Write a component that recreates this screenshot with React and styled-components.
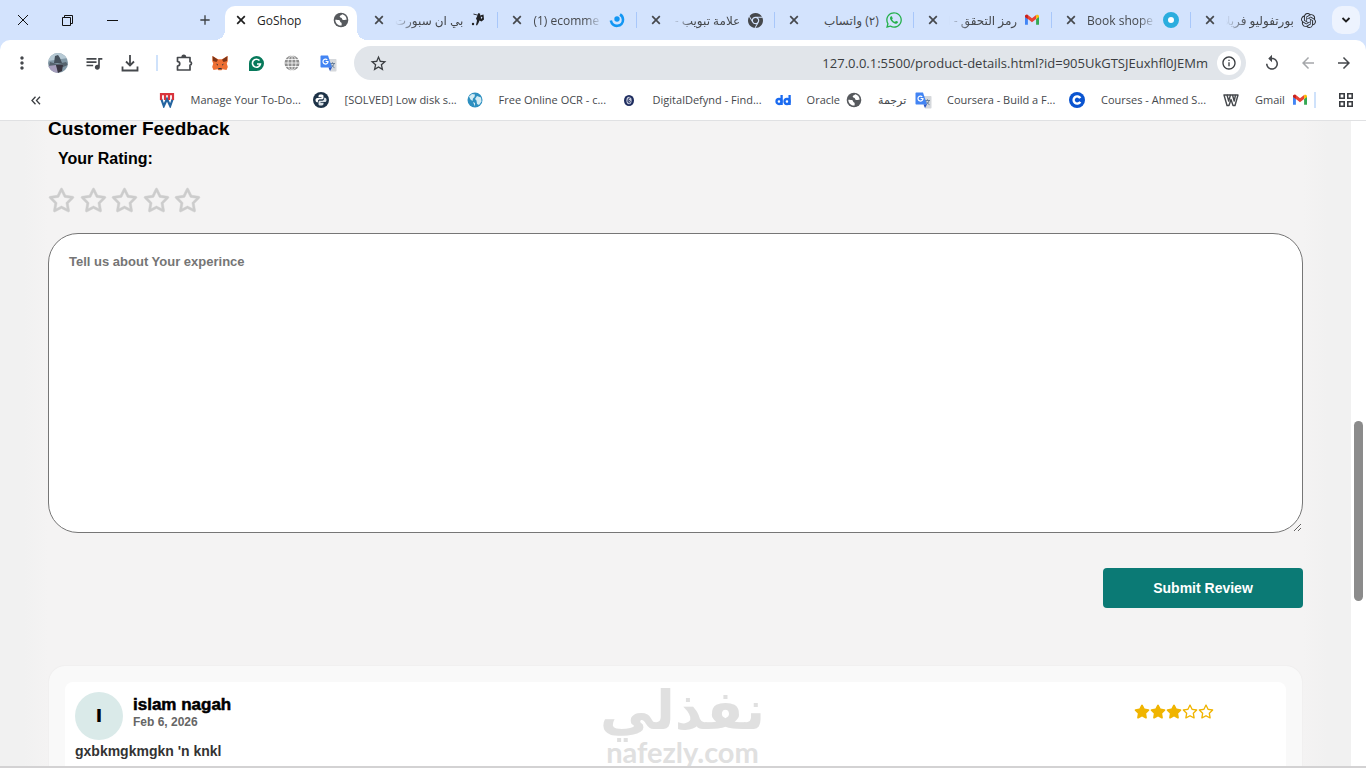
import React, { useState } from 'react';
import styled, { createGlobalStyle } from 'styled-components';
import { FaStar, FaRegStar, FaWhatsapp, FaChrome } from 'react-icons/fa6';
import { SiOpenai } from 'react-icons/si';
import {
    MdAdd,
    MdArrowBack,
    MdArrowForward,
    MdMoreVert,
    MdOutlineInfo,
    MdQueueMusic,
    MdReplay,
    MdStarBorder,
} from 'react-icons/md';

const GlobalStyle = createGlobalStyle`
    * {
        box-sizing: border-box;
    }

    body {
        margin: 0;
        overflow: hidden;
        font-family: 'Liberation Sans', Arial, sans-serif;
    }

    button {
        font: inherit;
        color: inherit;
        border: 0;
        padding: 0;
        background: none;
        cursor: pointer;
    }
`;

const Window = styled.div`
    display: flex;
    flex-direction: column;
    height: 100vh;
    overflow: hidden;
    background: #fff;
`;

const Chrome = styled.header`
    flex: none;
    background: #d3e3fd;
    border-bottom: 1px solid #e0e1e3;
    font-family: 'Open Sans', 'DejaVu Sans', sans-serif;
    color: #45484c;
`;

const TabStrip = styled.div`
    display: flex;
    align-items: center;
    height: 40px;
    padding-right: 6px;
`;

const WindowControl = styled.button`
    display: flex;
    align-items: center;
    justify-content: center;
    width: 45px;
    height: 40px;
    color: #111;
`;

const NewTab = styled.button`
    display: flex;
    align-items: center;
    justify-content: center;
    width: 28px;
    height: 28px;
    margin: 0 6px 0 auto;
    color: #3c4043;
`;

const Controls = styled.div`
    display: flex;
    width: 225px;
    align-items: center;
`;

const TabBox = styled.div`
    position: relative;
    display: flex;
    align-items: center;
    flex: ${props => props.$active ? '0 0 132px' : '1 1 0'};
    min-width: 0;
    height: ${props => props.$active ? '34px' : '16px'};
    margin: ${props => props.$active ? '6px 3px 0 0' : '0'};
    padding: ${props => props.$active ? '0 8px 6px 9px' : '0 11px 0 12px'};
    border-radius: ${props => props.$active ? '10px 10px 0 0' : '0'};
    background: ${props => props.$active ? '#fff' : 'transparent'};
    color: ${props => props.$active ? '#1f1f1f' : '#45484c'};
    border-right: ${props => props.$divider ? '1px solid #a8c7fa' : '0'};

    &::before,
    &::after {
        content: '';
        display: ${props => props.$active ? 'block' : 'none'};
        position: absolute;
        bottom: 0;
        width: 10px;
        height: 10px;
    }

    &::before {
        left: -10px;
        background: radial-gradient(circle at 0 0, transparent 10px, #fff 10px);
    }

    &::after {
        right: -10px;
        background: radial-gradient(circle at 100% 0, transparent 10px, #fff 10px);
    }
`;

const TabClose = styled.button`
    display: flex;
    justify-content: center;
    flex: none;
    width: 14px;
`;

const TabTitle = styled.span`
    flex: 1;
    margin: 0 7px 0 9px;
    padding-top: 2px;
    overflow: hidden;
    white-space: nowrap;
    font-size: 12px;
    line-height: 18px;
    direction: ${props => props.$rtl ? 'rtl' : 'ltr'};
    text-align: ${props => props.$rtl ? 'right' : 'left'};
    mask-image: ${props => {
        if (!props.$fade) return 'none';
        return props.$rtl
            ? 'linear-gradient(to left, #000 70%, transparent)'
            : 'linear-gradient(to right, #000 75%, transparent)';
    }};
`;

const Favicon = styled.span`
    display: flex;
    align-items: center;
    justify-content: center;
    flex: none;
    width: 16px;
    height: 16px;

    svg {
        flex: none;
    }
`;

const TabSearch = styled.button`
    display: flex;
    align-items: center;
    justify-content: center;
    flex: none;
    width: 28px;
    height: 28px;
    margin-left: 4px;
    border-radius: 10px;
    background: #edf3fe;
    color: #1f1f1f;
`;

const Toolbar = styled.div`
    display: flex;
    align-items: center;
    height: 46px;
    padding: 0 4px;
    border-radius: 10px 10px 0 0;
    background: #fff;
`;

const ToolButton = styled.button`
    display: flex;
    align-items: center;
    justify-content: center;
    flex: none;
    width: 36px;
    height: 34px;
    color: ${props => props.$muted ? '#a5a7aa' : '#45484c'};
`;

const Divider = styled.span`
    flex: none;
    width: 2px;
    height: 16px;
    margin: ${props => props.$wide ? '0 18px 0 6px' : '0 8px'};
    background: #cfe2fb;
`;

const AddressBar = styled.form`
    display: flex;
    align-items: center;
    flex: 1;
    height: 34px;
    margin: 0 8px;
    padding: 0 5px 0 12px;
    border-radius: 17px;
    background: #e1e5ea;
`;

const Address = styled.input`
    flex: 1;
    min-width: 0;
    margin: 0 9px;
    padding: 0;
    border: 0;
    outline: 0;
    background: none;
    color: #3a3d41;
    font: 13px 'Open Sans', sans-serif;
    text-align: right;
`;

const RoundButton = styled.button`
    display: flex;
    align-items: center;
    justify-content: center;
    width: 24px;
    height: 24px;
    border-radius: 50%;
    background: ${props => props.$filled ? '#fff' : 'transparent'};
    color: #3a3d41;
`;

const BookmarkBar = styled.nav`
    display: flex;
    align-items: center;
    height: 34px;
    padding: 0 8px 6px 24px;
    background: #fff;
`;

const Bookmarks = styled.div`
    display: flex;
    flex: 1;
    justify-content: flex-end;
    gap: 16px;
`;

const Bookmark = styled.a`
    display: flex;
    align-items: center;
    gap: 6px;
    color: #45484c;
    text-decoration: none;
    font-size: 11px;
    line-height: 18px;
    white-space: nowrap;
`;

const BookmarkLabel = styled.span`
    min-width: ${props => props.$long ? '116px' : '31px'};
`;

const Viewport = styled.div`
    display: flex;
    flex: 1;
    min-height: 0;
    border-bottom: 2px solid #d3d2d3;
`;

const Page = styled.main`
    flex: 1;
    overflow: hidden;
    padding: 0 48px;
    background: linear-gradient(to right, #f1f1f1 24px, #f4f3f3 48px, #f4f3f3 calc(100% - 48px), #f1f1f1 calc(100% - 24px));
`;

const ScrollTrack = styled.div`
    flex: none;
    width: 15px;
    padding: 300px 3px 0;
    background: #fff;
`;

const ScrollThumb = styled.div`
    height: 180px;
    border-radius: 5px;
    background: #8b8b8b;
`;

const Heading = styled.h3`
    display: flex;
    align-items: flex-end;
    height: 18px;
    margin: 0;
    font-size: 19px;
    line-height: 20px;
`;

const RatingField = styled.fieldset`
    margin: 10px 0 0;
    padding: 0;
    border: 0;
`;

const RatingLabel = styled.legend`
    margin-left: 10px;
    padding: 0;
    font-size: 16px;
    font-weight: bold;
    line-height: 20px;
`;

const RatingStars = styled.div`
    display: flex;
    justify-content: space-between;
    width: 153px;
    margin-top: 18px;
`;

const RatingStar = styled.label`
    position: relative;
    display: flex;
    color: ${props => props.$on ? '#f0b400' : '#ccc'};
    cursor: pointer;

    input {
        position: absolute;
        inset: 0;
        margin: 0;
        opacity: 0;
    }

    svg {
        width: 27px;
        height: 26px;
        stroke: currentColor;
        stroke-width: 10;
    }
`;

const Feedback = styled.textarea`
    display: block;
    width: 100%;
    height: 300px;
    margin-top: 20px;
    padding: 20px;
    border: 1px solid #767676;
    border-radius: 30px;
    background: #fff;
    font: bold 13px/16px 'Liberation Sans', Arial, sans-serif;
    outline: 0;

    &::placeholder {
        color: #757575;
    }
`;

const SubmitButton = styled.button`
    display: block;
    width: 200px;
    height: 40px;
    margin: 35px 0 58px auto;
    border-radius: 4px;
    background: #0b7a75;
    color: #fff;
    font-size: 14px;
    font-weight: bold;
`;

const Reviews = styled.section`
    margin: 0 1px;
    padding: 16px;
    border-radius: 16px;
    background: #f9f9f9;
    box-shadow: 0 0 2px rgba(0, 0, 0, 0.06);
`;

const Review = styled.article`
    position: relative;
    min-height: 120px;
    padding: 10px;
    border-radius: 8px;
    background: #fff;
`;

const ReviewHeader = styled.div`
    display: flex;
    align-items: center;
    gap: 10px;
`;

const Avatar = styled.div`
    display: flex;
    align-items: center;
    justify-content: center;
    width: 48px;
    height: 48px;
    border-radius: 50%;
    background: #daeae9;
    font: 900 17px 'Inter', sans-serif;
`;

const Reviewer = styled.div`
    padding-bottom: 6px;
`;

const ReviewerName = styled.h4`
    margin: 0;
    font: bold 17px/18px 'Liberation Sans', Arial, sans-serif;
    -webkit-text-stroke: 0.5px #000;
`;

const ReviewDate = styled.time`
    display: block;
    color: #666;
    font-size: 12px;
    font-weight: bold;
    line-height: 16px;
`;

const ReviewStars = styled.div`
    display: flex;
    margin: 0 62px 10px auto;
    color: #f0b400;

    svg {
        width: 16px;
        height: 15px;
    }
`;

const ReviewText = styled.p`
    margin: 2px 0 0;
    color: #333;
    font-size: 14px;
    font-weight: bold;
    line-height: 18px;
`;

const Watermark = styled.div`
    position: absolute;
    top: 0;
    left: 0;
    right: 0;
    padding-left: 14px;
    color: #e0e0e0;
    text-align: center;
    pointer-events: none;
`;

const WatermarkArabic = styled.div`
    font: bold 54px/58px 'DejaVu Sans', sans-serif;
`;

const WatermarkLatin = styled.div`
    font: bold 29px/24px 'Lato', sans-serif;
`;

const CloseIcon = () => (
    <svg width="10" height="10" viewBox="0 0 10 10" stroke="currentColor" strokeWidth="1.700">
        <path d="M1.200 1.200l7.600 7.600M8.800 1.200L1.200 8.800" />
    </svg>
);

const GlobeIcon = () => (
    <svg width="16" height="16" viewBox="0 0 16 16">
        <circle cx="8" cy="8" r="7.3" fill="#56595d" />
        <path d="M2.300 7.800c1.700.2 3.500 0 4.400.8.700.7.100 1.700 1.300 1.900.9.200.7 1.400.6 3.100C5 13.800 2.300 11.300 2.300 7.800zM9 2.300c-.1 1.300-2.200.9-2.300 2.200-.1 1 1.400.9 1.900 1.500.6.700.4 1.900 1.700 2 1.300.1 1.900-.7 3.300-.2C13.700 5 11.700 2.700 9 2.300z" fill="#fff" />
    </svg>
);

const GmailIcon = () => (
    <svg width="16" height="16" viewBox="0 0 16 16">
        <path d="M1 4.500v8.300h2.900V7z" fill="#4285f4" />
        <path d="M15 4.500v8.300h-2.900V7z" fill="#34a853" />
        <path d="M1 4.200C1 2.800 2.700 2.200 3.900 3.100L8 6.200l4.100-3.100V7L8 10.200 3.900 7 1 4.900z" fill="#ea4335" />
        <path d="M1 4.200c0-1.400 1.700-2 2.900-1.100V7L1 4.900z" fill="#c5221f" />
        <path d="M15 4.200c0-1.400-1.700-2-2.900-1.100V7L15 4.900z" fill="#fbbc04" />
    </svg>
);

const TranslateIcon = () => (
    <svg width="17" height="17" viewBox="0 0 17 17">
        <path d="M7 4h8.500c.6 0 1 .4 1 1v10.500c0 .6-.4 1-1 1H10z" fill="#d5d8dc" />
        <path d="M10 8.500h5M12.500 7.300v1.200M14 8.500c-.4 2-1.700 3.300-3.300 4.200M11.300 9.500c.7 1.500 1.800 2.600 3.200 3.200" stroke="#69809c" fill="none" />
        <path d="M1.500.5H8l4 12H1.500c-.6 0-1-.4-1-1v-10c0-.6.4-1 1-1z" fill="#4284f3" />
        <path d="M8.500 12.500H12l-2 3.500z" fill="#2a56c6" />
        <path d="M7.300 4.800A2.500 2.500 0 1 0 8 6.500H5.600" stroke="#fff" strokeWidth="1.200" fill="none" />
    </svg>
);

const BeinIcon = () => (
    <svg width="16" height="16" viewBox="0 0 16 16">
        <path d="M3.500 1.500l4 1.200 1-1.700 1.700.8-.2 1.700 3.500-1 .5 5-2.500 2-2-1-1 2.500-1.500 2.500-1-.5 1-4.500-1-2 1.500-3-4-1z" fill="#202124" />
        <path d="M10.800 4.500l1.700.8-1.500 2z" fill="#d3e3fd" />
        <circle cx="3" cy="12" r="1.200" fill="#202124" />
    </svg>
);

const SwirlIcon = () => (
    <svg width="16" height="16" viewBox="0 0 16 16">
        <path d="M1.800 8.500c.9 3.400 3.500 5.600 6.700 5.300 3.300-.3 5.700-3 5.500-6.300-.1-2.200-1.200-4-3-5" fill="none" stroke="#1296f3" strokeWidth="2.600" />
        <circle cx="8" cy="7" r="2.700" fill="#1296f3" />
    </svg>
);

const RingIcon = () => (
    <svg width="16" height="16" viewBox="0 0 16 16">
        <circle cx="8" cy="8" r="5.500" fill="#fff" stroke="#2badde" strokeWidth="5" />
    </svg>
);

const StripedWIcon = () => (
    <svg width="16" height="16" viewBox="0 0 16 16" fill="none" strokeWidth="2.200">
        <path d="M2.300 7l2.500 7L8 7l3.200 7 2.500-7" stroke="#2464a0" />
        <path d="M2 8V2.200h4V8M6 2.200h4V8M10 2.200h4V8" stroke="#d8343c" />
    </svg>
);

const OutlineWIcon = () => (
    <svg width="16" height="16" viewBox="0 0 16 16" fill="none" stroke="#45484c" strokeWidth="1.400" strokeLinejoin="round">
        <path d="M1 3h3l1.700 6L7.500 3h2l1.700 6L12.500 3H15l-3 10.500h-2L8 7.500l-2 6H4z" />
        <path d="M4 3h3.500M9.500 3h3" />
    </svg>
);

const PythonIcon = () => (
    <svg width="16" height="16" viewBox="0 0 16 16">
        <circle cx="8" cy="8" r="8" fill="#1d3247" />
        <path d="M8 2.500c-1.800 0-2.500.6-2.500 1.500v1.300h3v.6H4.300C3 5.900 2.500 6.900 2.500 8s.5 2.200 1.500 2.200h1V9c0-.9.700-1.500 1.500-1.500h2.700c.8 0 1.300-.6 1.300-1.300V4c0-1-.8-1.500-2.500-1.500z" fill="#fff" />
        <path d="M8 13.500c1.800 0 2.500-.6 2.500-1.500v-1.300h-3v-.6h4.200c1.300 0 1.800-1 1.800-2.100s-.5-2.200-1.500-2.200h-1V7c0 .9-.7 1.500-1.500 1.500H6.800c-.8 0-1.300.6-1.300 1.300V12c0 1 .8 1.500 2.500 1.500z" fill="#dbe2e8" />
        <path d="M5.300 9.500c.2-1 .7-1.500 1.700-1.500h2c1 0 1.500-.5 1.700-1.500" fill="none" stroke="#1d3247" strokeWidth=".8" />
    </svg>
);

const EarthIcon = () => (
    <svg width="16" height="16" viewBox="0 0 16 16">
        <circle cx="8" cy="8" r="7.500" fill="#2d8fc0" />
        <path d="M2 4.500L5 2l3 .5L7.500 5 6 6.500 5.500 9 3.500 7.500zM10 4l4 1.500.5 4L12 13l-2-1-.5-3.500L8 7zM6 10l2 1v3.500z" fill="#d4ecf4" />
    </svg>
);

const OvalIcon = () => (
    <svg width="16" height="16" viewBox="0 0 16 16">
        <ellipse cx="8" cy="8.500" rx="5" ry="5.500" fill="#1e2d5f" />
        <ellipse cx="8" cy="8.500" rx="2.600" ry="3.700" fill="#c9cede" />
        <path d="M9.500 5.500C7.500 6 7 7.500 7 9c0 2.500 2.300 2.300 2.300.5 0-1.300-1.500-1.300-2 0" fill="none" stroke="#1e2d5f" />
    </svg>
);

const DdIcon = () => (
    <svg width="16" height="16" viewBox="0 0 16 16" fill="none" stroke="#1a6af0" strokeWidth="2.300">
        <circle cx="4" cy="9.500" r="2.500" />
        <path d="M6.600 3v10" />
        <circle cx="12" cy="9.500" r="2.500" />
        <path d="M14.600 3v10" />
    </svg>
);

const CourseraIcon = () => (
    <svg width="16" height="16" viewBox="0 0 16 16">
        <circle cx="8" cy="8" r="8" fill="#0a54d0" />
        <path d="M11.300 9.800a3.600 3.600 0 1 1 0-3.600" fill="none" stroke="#fff" strokeWidth="2.400" />
    </svg>
);

const FoxIcon = () => (
    <svg width="18" height="18" viewBox="0 0 18 18">
        <path d="M1.500 2L7 5.200h4L16.500 2l.3 5-1 2.500 1 3.500-1.300 3-4-.8-1 1h-3l-1-1-4 .8-1.300-3 1-3.500-1-2.500z" fill="#ee6f33" />
        <path d="M1.500 2l5.500 3.800L5.500 8 2 7zM16.500 2L11 5.800 12.500 8 16 7z" fill="#7d3518" />
        <path d="M5 9.500l2 1-.3 1.200zM13 9.500l-2 1 .3 1.200zM7.500 14h3l.4 1.300H7.100z" fill="#29343d" />
    </svg>
);

const GrammarlyIcon = () => (
    <svg width="17" height="17" viewBox="0 0 17 17">
        <path d="M8.500 1a7.500 7.500 0 1 1 0 15H1V8.500A7.500 7.500 0 0 1 8.500 1z" fill="#07795b" />
        <path d="M11.500 5.600A4 4 0 1 0 12.400 9H9" fill="none" stroke="#fff" strokeWidth="1.600" />
    </svg>
);

const WireGlobeIcon = () => (
    <svg width="16" height="16" viewBox="0 0 16 16">
        <circle cx="8" cy="8" r="7.500" fill="#8f8f8f" />
        <path d="M0 4.500h16M0 8h16M0 11.500h16M8 0v16" stroke="#fff" strokeWidth=".8" />
        <ellipse cx="8" cy="8" rx="4" ry="7.500" fill="none" stroke="#fff" strokeWidth=".8" />
    </svg>
);

const ProfileIcon = () => (
    <svg width="20" height="20" viewBox="0 0 20 20">
        <clipPath id="profile"><circle cx="10" cy="10" r="10" /></clipPath>
        <g clipPath="url(#profile)">
            <path d="M0 0h20v20H0z" fill="#8298a6" />
            <path d="M0 0h20v5L0 8z" fill="#b6c9d4" />
            <path d="M7 3l3-1 2 3 2 5H6z" fill="#45505b" />
            <path d="M2 9l7 2 9-2 2 3-5 2-14-1z" fill="#56636e" />
            <path d="M0 13l8-1 2 8H2z" fill="#a59dbb" />
            <path d="M8 12h7l-1 6-4 2z" fill="#38343f" />
        </g>
    </svg>
);

const tabs = [
    { title: 'بي ان سبورت', rtl: true, fade: true, icon: <BeinIcon /> },
    { title: '(1) ecomme', fade: true, icon: <SwirlIcon /> },
    { title: 'علامة تبويب -', rtl: true, fade: true, icon: <FaChrome size={15} color="#45484c" /> },
    { title: '(٢) واتساب', rtl: true, icon: <FaWhatsapp size={18} color="#25b04c" /> },
    { title: 'رمز التحقق - ا', rtl: true, fade: true, icon: <GmailIcon /> },
    { title: 'Book shope', fade: true, icon: <RingIcon /> },
    { title: 'بورتفوليو فريلا', rtl: true, fade: true, icon: <SiOpenai size={15} color="#2b2d30" /> },
];

const bookmarks = [
    { label: '', icon: <StripedWIcon /> },
    { label: 'Manage Your To-Do...', long: true, icon: <PythonIcon /> },
    { label: '[SOLVED] Low disk s...', long: true, icon: <EarthIcon /> },
    { label: 'Free Online OCR - c...', long: true, icon: <OvalIcon /> },
    { label: 'DigitalDefynd - Find...', long: true, icon: <DdIcon /> },
    { label: 'Oracle', icon: <GlobeIcon /> },
    { label: 'ترجمة', icon: <TranslateIcon /> },
    { label: 'Coursera - Build a F...', long: true, icon: <CourseraIcon /> },
    { label: 'Courses - Ahmed S...', long: true, icon: <OutlineWIcon /> },
    { label: 'Gmail', icon: <GmailIcon /> },
];

const Tab = ({ title, rtl, fade, icon, active, divider }) => (
    <TabBox $active={active} $divider={divider}>
        <TabClose aria-label="Close tab"><CloseIcon /></TabClose>
        <TabTitle $rtl={rtl} $fade={fade}>{title}</TabTitle>
        <Favicon>{icon}</Favicon>
    </TabBox>
);

const BrowserTabs = () => (
    <TabStrip>
        <Controls>
            <WindowControl aria-label="Close">
                <svg width="12" height="12" viewBox="0 0 12 12" stroke="currentColor"><path d="M1 1l10 10M11 1L1 11" /></svg>
            </WindowControl>
            <WindowControl aria-label="Restore">
                <svg width="11" height="11" viewBox="0 0 11 11" fill="none" stroke="currentColor"><path d="M.5 2.500h8v8h-8zM2.500 2.500v-2h8v8h-2" /></svg>
            </WindowControl>
            <WindowControl aria-label="Minimize">
                <svg width="11" height="11" viewBox="0 0 11 11" stroke="currentColor"><path d="M0 5.500h11" /></svg>
            </WindowControl>
            <NewTab aria-label="New tab"><MdAdd size={16} /></NewTab>
        </Controls>
        <Tab title="GoShop" active icon={<GlobeIcon />} />
        {tabs.map((tab, i) => (
            <Tab key={tab.title} {...tab} divider={i < tabs.length - 1} />
        ))}
        <TabSearch aria-label="Search tabs">
            <svg width="10" height="10" viewBox="0 0 10 10" fill="none" stroke="currentColor" strokeWidth="1.800"><path d="M1.500 3L5 6.500 8.500 3" /></svg>
        </TabSearch>
    </TabStrip>
);

const BrowserToolbar = () => (
    <Toolbar>
        <ToolButton aria-label="Menu"><MdMoreVert size={20} /></ToolButton>
        <ToolButton aria-label="Profile"><ProfileIcon /></ToolButton>
        <ToolButton aria-label="Media"><MdQueueMusic size={20} /></ToolButton>
        <ToolButton aria-label="Downloads">
            <svg width="18" height="18" viewBox="0 0 18 18" fill="none" stroke="currentColor" strokeWidth="1.800"><path d="M9 1v10M5 7.500l4 4 4-4M1.500 12.500v4h15v-4" /></svg>
        </ToolButton>
        <Divider />
        <ToolButton aria-label="Extensions">
            <svg width="18" height="18" viewBox="0 0 18 18" fill="none" stroke="currentColor" strokeWidth="1.700" strokeLinejoin="round">
                <path d="M2.500 3.500H15v4.200c2 0 2 3.300 0 3.300v5H2.500v-3.800c3-.6 3-4.200 0-4.800z" />
                <path d="M7.200 3.200c0-2.400 3.200-2.400 3.200 0z" fill="currentColor" />
            </svg>
        </ToolButton>
        <ToolButton aria-label="MetaMask"><FoxIcon /></ToolButton>
        <ToolButton aria-label="Grammarly"><GrammarlyIcon /></ToolButton>
        <ToolButton aria-label="Proxy"><WireGlobeIcon /></ToolButton>
        <ToolButton aria-label="Translate"><TranslateIcon /></ToolButton>
        <AddressBar onSubmit={e => e.preventDefault()}>
            <RoundButton type="button" aria-label="Bookmark this page"><MdStarBorder size={19} /></RoundButton>
            <Address aria-label="Address" defaultValue="127.0.0.1:5500/product-details.html?id=905UkGTSJEuxhfl0JEMm" />
            <RoundButton type="button" $filled aria-label="Site information"><MdOutlineInfo size={16} /></RoundButton>
        </AddressBar>
        <ToolButton aria-label="Reload"><MdReplay size={18} /></ToolButton>
        <ToolButton $muted aria-label="Back"><MdArrowBack size={18} /></ToolButton>
        <ToolButton aria-label="Forward"><MdArrowForward size={18} /></ToolButton>
    </Toolbar>
);

const BrowserBookmarks = () => (
    <BookmarkBar>
        <RoundButton aria-label="More bookmarks">
            <svg width="10" height="9" viewBox="0 0 10 9" fill="none" stroke="currentColor" strokeWidth="1.300"><path d="M4.500.8L1 4.500l3.500 3.700M9 .8L5.500 4.500 9 8.200" /></svg>
        </RoundButton>
        <Bookmarks>
            {bookmarks.map(({ label, long, icon }) => (
                <Bookmark key={label} href="#">
                    {label && <BookmarkLabel $long={long}>{label}</BookmarkLabel>}
                    <Favicon>{icon}</Favicon>
                </Bookmark>
            ))}
        </Bookmarks>
        <Divider $wide />
        <RoundButton aria-label="Apps">
            <svg width="14" height="14" viewBox="0 0 14 14" fill="none" stroke="currentColor" strokeWidth="1.600"><path d="M.8.8h4.400v4.400H.8zM8.800.8h4.400v4.400H8.800zM.8 8.800h4.400v4.400H.8zM8.800 8.800h4.400v4.400H8.800z" /></svg>
        </RoundButton>
    </BookmarkBar>
);

const FeedbackForm = () => {
    const [rating, setRating] = useState(0);

    return (
        <form onSubmit={e => e.preventDefault()}>
            <Heading>Customer Feedback</Heading>
            <RatingField>
                <RatingLabel>Your Rating:</RatingLabel>
                <RatingStars>
                    {[1, 2, 3, 4, 5].map(n => (
                        <RatingStar key={n} $on={n <= rating}>
                            <input
                                type="radio"
                                name="rating"
                                aria-label={`${n} stars`}
                                checked={rating === n}
                                onChange={() => setRating(n)}
                            />
                            {n <= rating ? <FaStar /> : <FaRegStar />}
                        </RatingStar>
                    ))}
                </RatingStars>
            </RatingField>
            <Feedback aria-label="Review" placeholder="Tell us about Your experince" />
            <SubmitButton type="submit">Submit Review</SubmitButton>
        </form>
    );
};

const ReviewCard = ({ name, date, stars, text }) => (
    <Review>
        <Watermark>
            <WatermarkArabic>نفذلي</WatermarkArabic>
            <WatermarkLatin>nafezly.com</WatermarkLatin>
        </Watermark>
        <ReviewHeader>
            <Avatar>{name[0].toUpperCase()}</Avatar>
            <Reviewer>
                <ReviewerName>{name}</ReviewerName>
                <ReviewDate>{date}</ReviewDate>
            </Reviewer>
            <ReviewStars>
                {[1, 2, 3, 4, 5].map(n => n <= stars ? <FaStar key={n} /> : <FaRegStar key={n} />)}
            </ReviewStars>
        </ReviewHeader>
        <ReviewText>{text}</ReviewText>
    </Review>
);

const App = () => (
    <Window>
        <GlobalStyle />
        <Chrome>
            <BrowserTabs />
            <BrowserToolbar />
            <BrowserBookmarks />
        </Chrome>
        <Viewport>
            <Page>
                <FeedbackForm />
                <Reviews>
                    <ReviewCard name="islam nagah" date="Feb 6, 2026" stars={3} text="gxbkmgkmgkn 'n knkl" />
                </Reviews>
            </Page>
            <ScrollTrack>
                <ScrollThumb />
            </ScrollTrack>
        </Viewport>
    </Window>
);

export default App;
